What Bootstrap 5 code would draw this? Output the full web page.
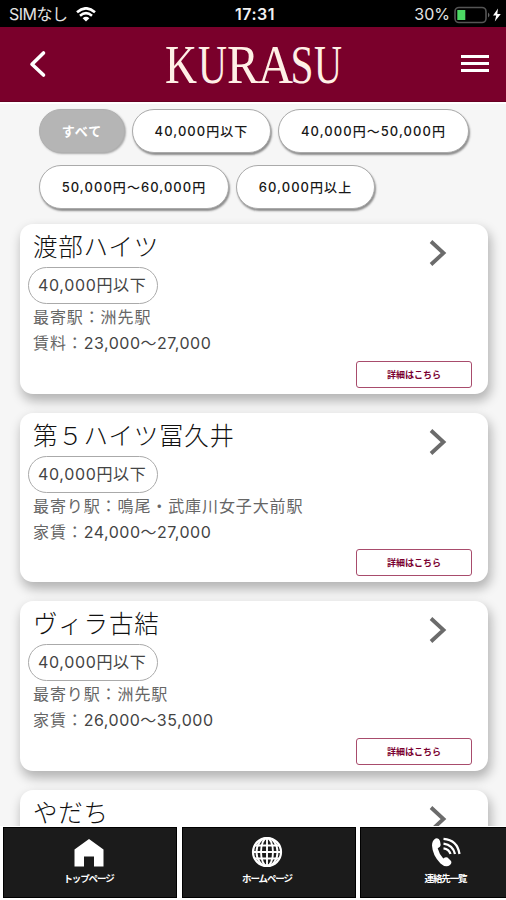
<!DOCTYPE html>
<html lang="ja">
<head>
<meta charset="utf-8">
<meta name="viewport" content="width=device-width, initial-scale=1">
<title>KURASU</title>
<link href="https://cdn.jsdelivr.net/npm/bootstrap@5.3.0/dist/css/bootstrap.min.css" rel="stylesheet">
<style>
body{font-family:Inter,"Noto Sans CJK JP",sans-serif;background:#f6f6f6;height:900px;color:#222}
.status{height:27px;background:#000;color:#e4e4e4;font-size:16px;line-height:27px;padding:2px 5px 0 9px}
.status>div{flex:1 1 0}
.status .sim{letter-spacing:-.5px}
.status .clock{font-weight:600;letter-spacing:.5px;color:#f2f2f2;font-size:16px}
.brandbar{height:75px;background:#7a002b;padding:0 17px 0 29px;border-bottom:1px solid #680022}
.wordmark{overflow:visible}
.filters{padding:5px 30px 0 39px;column-gap:7px;row-gap:12px;border-top:2px solid #fff}
.chip{height:44px;border:1px solid #aaa;border-radius:22px;background:#fff;color:#181818;font-size:13px;font-weight:500;letter-spacing:1.05px;box-shadow:1px 2px 2px #8d8d8d;padding:0;line-height:42px;white-space:nowrap}
.chip.on{background:#b5b5b5;color:#fff;border-color:#b0b0b0;font-weight:700;box-shadow:1px 1px 2px #aaa}
.w1{width:86px}.w2{width:139px}.w3{width:191px}.w4{width:190px}
.rooms{padding:15px 18px 0 20px;gap:19px}
.room{height:169.7px;border-radius:13px;background:#fff;box-shadow:2px 6px 11px 1px rgba(0,0,0,.27);padding:4px 16px 6px 13px;flex:none}
.room h2{font-size:24.5px;letter-spacing:.8px;line-height:38px;height:38px;font-weight:300;margin:0;color:#111}
.price{width:130px;height:37px;margin-left:-5px;border:1px solid #aaa;border-radius:19px;line-height:35px;font-size:16px;letter-spacing:.65px;padding-left:9px;color:#444;white-space:nowrap;margin-top:1px}
.facts{font-size:16px;letter-spacing:.9px;line-height:26px;color:#666;white-space:nowrap}
.facts b{font-weight:400;letter-spacing:.5px;color:#444}
.arrow{margin:11px 24px 0 0}
.more{width:116px;height:27px;border:1px solid #a84c6c;border-radius:3px;color:#7a0030;font-size:9px;font-weight:700;line-height:25px;padding:0;background:#fff}
.tabs{height:74px;background:#fff;padding:1px 0 2px 3px;gap:4.5px}
.tab{width:174px;height:71px;flex:none;background:#1b1b1b;border:1px solid #000;color:#fff;font-size:9.5px;font-weight:700;padding-top:8px;letter-spacing:-1.1px;line-height:14px}
.tab svg{margin:0 3px 4px 0}
.tab span{margin-right:3px}
</style>
<script src="https://cdn.jsdelivr.net/npm/bootstrap@5.3.0/dist/js/bootstrap.bundle.min.js"></script>
</head>
<body class="d-flex flex-column overflow-hidden">
<div class="status d-flex align-items-center flex-shrink-0">
  <div class="d-flex align-items-center gap-2"><span class="sim">SIMなし</span>
    <svg width="20" height="15" viewBox="0 0 20 15" fill="none" stroke="#fff" stroke-width="2.6"><path d="M1 5.2Q10-2.6 19 5.2M4 8.7Q10 3.6 16 8.7"/><path d="M10 14.6L6.600 11.200Q10 8.400 13.400 11.200Z" fill="#fff" stroke="none"/></svg></div>
  <span class="clock">17:31</span>
  <div class="d-flex align-items-center justify-content-end gap-1"><span>30%</span>
    <svg width="47" height="18" viewBox="0 0 47 18"><rect x="1" y="1.500" width="31" height="15" rx="4" fill="none" stroke="#555" stroke-width="1.6"/><rect x="3.300" y="4" width="8" height="10" fill="#4cd964"/><path d="M34 6.500q3 2.500 0 5z" fill="#666"/><path d="M44 2.500l-5 7h3.200l-1.400 6 6-7.600h-3.500z" fill="#fff"/></svg></div>
</div>
<header class="brandbar d-flex align-items-center justify-content-between flex-shrink-0">
  <svg width="18" height="28" viewBox="0 0 18 28" fill="none" stroke="#fff" stroke-width="3.6" stroke-linecap="round" stroke-linejoin="round"><path d="M14.500 3L3 14.300 14.500 25"/></svg>
  <svg class="wordmark" width="182" height="66" viewBox="0 -9 182 66"><text y="43" font-family="'Liberation Serif',serif" font-size="54" fill="#fff0e6"><tspan x="2" textLength="32" lengthAdjust="spacingAndGlyphs">K</tspan><tspan x="35" textLength="29" lengthAdjust="spacingAndGlyphs">U</tspan><tspan x="64" textLength="32" lengthAdjust="spacingAndGlyphs">R</tspan><tspan x="95" textLength="35" lengthAdjust="spacingAndGlyphs">A</tspan><tspan x="127.500" textLength="23" lengthAdjust="spacingAndGlyphs">S</tspan><tspan x="151" textLength="28" lengthAdjust="spacingAndGlyphs">U</tspan></text></svg>
  <svg width="28" height="18" viewBox="0 0 28 18" fill="#fff"><path d="M0 0h28v3H0zM0 7h28v3H0zM0 14h28v3H0z"/></svg>
</header>
<main class="flex-grow-1 overflow-hidden" style="min-height:0">
  <div class="filters d-flex flex-wrap">
    <button class="chip on w1">すべて</button><button class="chip w2">40,000円以下</button><button class="chip w3">40,000円〜50,000円</button><button class="chip w4">50,000円〜60,000円</button><button class="chip w2">60,000円以上</button>
  </div>
  <div class="rooms d-flex flex-column">
    <article class="room d-flex justify-content-between">
      <div><h2>渡部ハイツ</h2><div class="price">40,000円以下</div><div class="facts">最寄駅：洲先駅<br>賃料：<b>23,000〜27,000</b></div></div>
      <div class="d-flex flex-column justify-content-between align-items-end"><svg class="arrow" width="20" height="28" viewBox="0 0 20 28" fill="none" stroke="#6b6b6b" stroke-width="3.8"><path d="M3 2.500L15.500 14 3 25.500"/></svg><button class="more">詳細はこちら</button></div>
    </article>
    <article class="room d-flex justify-content-between">
      <div><h2>第５ハイツ冨久井</h2><div class="price">40,000円以下</div><div class="facts">最寄り駅：鳴尾・武庫川女子大前駅<br>家賃：<b>24,000〜27,000</b></div></div>
      <div class="d-flex flex-column justify-content-between align-items-end"><svg class="arrow" width="20" height="28" viewBox="0 0 20 28" fill="none" stroke="#6b6b6b" stroke-width="3.8"><path d="M3 2.500L15.500 14 3 25.500"/></svg><button class="more">詳細はこちら</button></div>
    </article>
    <article class="room d-flex justify-content-between">
      <div><h2>ヴィラ古結</h2><div class="price">40,000円以下</div><div class="facts">最寄り駅：洲先駅<br>家賃：<b>26,000〜35,000</b></div></div>
      <div class="d-flex flex-column justify-content-between align-items-end"><svg class="arrow" width="20" height="28" viewBox="0 0 20 28" fill="none" stroke="#6b6b6b" stroke-width="3.8"><path d="M3 2.500L15.500 14 3 25.500"/></svg><button class="more">詳細はこちら</button></div>
    </article>
    <article class="room d-flex justify-content-between">
      <h2>やだち</h2>
      <svg class="arrow" width="20" height="28" viewBox="0 0 20 28" fill="none" stroke="#6b6b6b" stroke-width="3.8"><path d="M3 2.500L15.500 14 3 25.500"/></svg>
    </article>
  </div>
</main>
<nav class="tabs d-flex flex-shrink-0 overflow-hidden">
  <div class="tab d-flex flex-column align-items-center">
    <svg width="32" height="32" viewBox="0 0 32 32" fill="#fff"><path d="M16 3L1.500 13.500V30.500H11V20.500H21V30.500H30.500V13.500Z"/></svg><span>トップページ</span></div>
  <div class="tab d-flex flex-column align-items-center">
    <svg width="32" height="32" viewBox="0 0 32 32" fill="none" stroke="#fff" stroke-width="1.9"><path d="M16 1V31M1 16H31M3 9.500H29M3 22.500H29"/><ellipse cx="16" cy="16" rx="6" ry="14"/><ellipse cx="16" cy="16" rx="10.500" ry="14"/><circle cx="16" cy="16" r="14" stroke-width="2.200"/></svg><span>ホームページ</span></div>
  <div class="tab d-flex flex-column align-items-center">
    <svg width="32" height="32" viewBox="0 0 32 32"><path d="M5.500 2.500Q9 1.500 10 5l.7 4q0 2-3 3.200 1.500 6 5.600 10.300 2.500-2 4.200-.9l3.300 3.200q1.500 2-.8 4.200-4 3.300-9.500-1.600Q2.500 19.500 2 9.500 2 4.500 5.500 2.500Z" fill="#fff"/><g fill="none" stroke="#fff" stroke-width="2.300"><path d="M13.500 2.800Q27.500 4 29.500 18"/><path d="M13.500 7.600Q23 9 25 18"/><path d="M13.500 12.300Q19 13 20.500 18"/></g></svg><span>連絡先一覧</span></div>
</nav>
</body>
</html>
